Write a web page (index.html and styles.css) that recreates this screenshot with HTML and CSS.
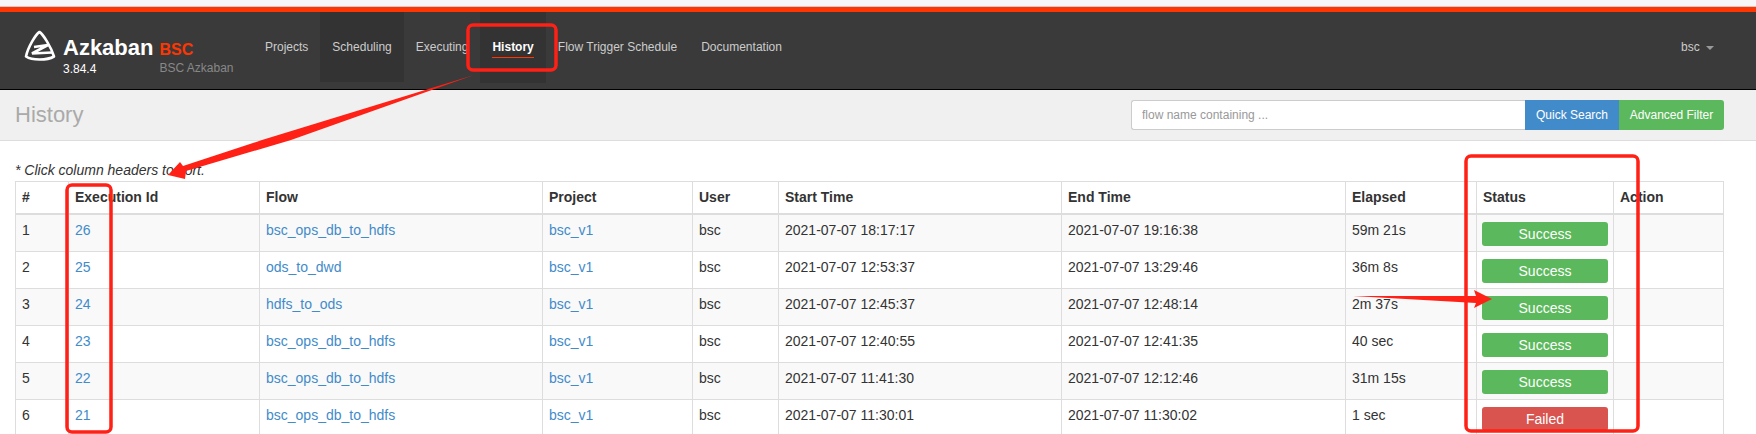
FILE: index.html
```html
<!DOCTYPE html>
<html lang="en">
<head>
  <meta charset="UTF-8">
  <title>Azkaban - History</title>
  <link rel="stylesheet" href="styles.css">
</head>
<body>
  <div class="topstrip"></div>
  <nav class="navbar">
    <div class="brand">
      <svg class="logo" viewBox="0 0 32 32" width="32" height="32">
        <path d="M15.5 2 C19 4 27 17 30 26.5 C23 30.5 8 30.5 2 26.5 C4 17 12 4 15.5 2 Z" fill="none" stroke="#fff" stroke-width="2.6" stroke-linejoin="round"/>
        <path d="M10 17 L24 15 L8 23.5 L28 22.5" fill="none" stroke="#fff" stroke-width="2.6"/>
      </svg>
      <div class="brand-name">
        <span class="brand-title">Azkaban</span>
        <span class="brand-version">3.84.4</span>
      </div>
      <div class="brand-env">
        <span class="env-name">BSC</span>
        <span class="env-desc">BSC Azkaban</span>
      </div>
    </div>
    <ul class="nav-links">
      <li><a href="#">Projects</a></li>
      <li class="dim"><a href="#">Scheduling</a></li>
      <li><a href="#">Executing</a></li>
      <li class="active"><a href="#">History</a></li>
      <li><a href="#">Flow Trigger Schedule</a></li>
      <li><a href="#">Documentation</a></li>
    </ul>
    <div class="user">bsc <span class="caret"></span></div>
  </nav>

  <div class="page-header">
    <h1>History</h1>
    <form class="search">
      <input type="text" placeholder="flow name containing ...">
      <button type="button" class="btn-blue">Quick Search</button>
      <button type="button" class="btn-green">Advanced Filter</button>
    </form>
  </div>

  <div class="content">
    <p class="note">* Click column headers to sort.</p>
    <table>
      <colgroup>
        <col class="c-num"><col class="c-id"><col class="c-flow"><col class="c-project"><col class="c-user">
        <col class="c-start"><col class="c-end"><col class="c-elapsed"><col class="c-status"><col>
      </colgroup>
      <thead>
        <tr>
          <th>#</th><th>Execution Id</th><th>Flow</th><th>Project</th><th>User</th>
          <th>Start Time</th><th>End Time</th><th>Elapsed</th><th>Status</th><th>Action</th>
        </tr>
      </thead>
      <tbody>
        <tr>
          <td>1</td><td><a href="#">26</a></td><td><a href="#">bsc_ops_db_to_hdfs</a></td><td><a href="#">bsc_v1</a></td><td>bsc</td>
          <td>2021-07-07 18:17:17</td><td>2021-07-07 19:16:38</td><td>59m 21s</td><td><div class="status ok">Success</div></td><td></td>
        </tr>
        <tr>
          <td>2</td><td><a href="#">25</a></td><td><a href="#">ods_to_dwd</a></td><td><a href="#">bsc_v1</a></td><td>bsc</td>
          <td>2021-07-07 12:53:37</td><td>2021-07-07 13:29:46</td><td>36m 8s</td><td><div class="status ok">Success</div></td><td></td>
        </tr>
        <tr>
          <td>3</td><td><a href="#">24</a></td><td><a href="#">hdfs_to_ods</a></td><td><a href="#">bsc_v1</a></td><td>bsc</td>
          <td>2021-07-07 12:45:37</td><td>2021-07-07 12:48:14</td><td>2m 37s</td><td><div class="status ok">Success</div></td><td></td>
        </tr>
        <tr>
          <td>4</td><td><a href="#">23</a></td><td><a href="#">bsc_ops_db_to_hdfs</a></td><td><a href="#">bsc_v1</a></td><td>bsc</td>
          <td>2021-07-07 12:40:55</td><td>2021-07-07 12:41:35</td><td>40 sec</td><td><div class="status ok">Success</div></td><td></td>
        </tr>
        <tr>
          <td>5</td><td><a href="#">22</a></td><td><a href="#">bsc_ops_db_to_hdfs</a></td><td><a href="#">bsc_v1</a></td><td>bsc</td>
          <td>2021-07-07 11:41:30</td><td>2021-07-07 12:12:46</td><td>31m 15s</td><td><div class="status ok">Success</div></td><td></td>
        </tr>
        <tr>
          <td>6</td><td><a href="#">21</a></td><td><a href="#">bsc_ops_db_to_hdfs</a></td><td><a href="#">bsc_v1</a></td><td>bsc</td>
          <td>2021-07-07 11:30:01</td><td>2021-07-07 11:30:02</td><td>1 sec</td><td><div class="status bad">Failed</div></td><td></td>
        </tr>
      </tbody>
    </table>
  </div>

  <!-- red markup drawn on top of the screenshot -->
  <svg class="markup" width="1756" height="434" viewBox="0 0 1756 434">
    <g fill="none" stroke="#ff2016" stroke-width="3.5">
      <rect x="468" y="25" width="88" height="45" rx="5"/>
      <rect x="67" y="185" width="44" height="247" rx="5"/>
      <rect x="1466" y="156" width="172" height="275" rx="5"/>
    </g>
    <g fill="#ff2016">
      <path d="M474 75 L291 140 L186 171 L185 179 L168 175 L180 162 L183 166 L262 140 Z"/>
      <path d="M1353 296 L1476 296 L1474 290 L1492 299 L1474 308 L1476 303 Z"/>
    </g>
  </svg>
</body>
</html>
```
FILE: styles.css
```css
html, body {
  margin: 0;
  height: 434px;
  overflow: hidden;
}
body {
  position: relative;
  font-family: "Liberation Sans", Arial, sans-serif;
  font-size: 14px;
  color: #333;
  background: #fff;
}
a {
  color: #428bca;
  text-decoration: none;
}

.topstrip {
  height: 6px;
  background: #f7f7f7;
  border-bottom: 1px solid #ccc;
}

.navbar {
  display: flex;
  height: 77px;
  background: #3a3a3a;
  border-top: 5px solid #ff3601;
  border-bottom: 1px solid #000;
}
.brand {
  display: flex;
  width: 253px;
  flex-shrink: 0;
  box-sizing: border-box;
  padding: 18px 0 0 24px;
}
.logo {
  margin-right: 7px;
}
.brand-name, .brand-env {
  display: flex;
  flex-direction: column;
}
.brand-title {
  font-size: 22px;
  font-weight: bold;
  line-height: 26px;
  margin-top: 5px;
  color: #fff;
}
.brand-version {
  font-size: 12px;
  line-height: 16px;
  color: #fff;
}
.brand-env {
  margin-left: 6px;
}
.env-name {
  font-size: 16px;
  font-weight: bold;
  line-height: 20px;
  margin-top: 10px;
  color: #ff3601;
}
.env-desc {
  font-size: 12px;
  line-height: 16px;
  color: #888;
}

.nav-links {
  display: flex;
  flex: 1;
  list-style: none;
  margin: 0;
  padding: 0;
}
.nav-links li {
  height: 70px;
  padding: 0 12px;
  font-size: 12px;
  line-height: 70px;
}
.nav-links a {
  display: block;
  height: 30px;
  line-height: 30px;
  margin-top: 20px;
  color: #ccc;
}
.nav-links .dim {
  background: #333;
}
.nav-links .active {
  background: #333;
  height: 71px;
}
.nav-links .active a {
  color: #fff;
  font-weight: bold;
  height: 25px;
  border-bottom: 1px solid #ff3601;
}
.user {
  padding: 20px 42px 0 0;
  font-size: 12px;
  line-height: 30px;
  color: #ccc;
}
.caret {
  display: inline-block;
  margin-left: 3px;
  vertical-align: middle;
  border-top: 4px solid #999;
  border-left: 4px solid transparent;
  border-right: 4px solid transparent;
}

.page-header {
  display: flex;
  justify-content: space-between;
  align-items: center;
  height: 51px;
  box-sizing: border-box;
  padding: 0 32px 0 15px;
  background: #f0f0f0;
  border-bottom: 1px solid #ddd;
}
.page-header h1 {
  margin: 0;
  font-size: 22px;
  font-weight: normal;
  color: #aaa;
}
.search {
  display: flex;
  height: 30px;
}
.search input {
  width: 394px;
  box-sizing: border-box;
  padding: 0 10px;
  font-family: inherit;
  font-size: 12px;
  border: 1px solid #ccc;
  border-right: none;
  border-radius: 3px 0 0 3px;
  background: #fff;
}
.search input::placeholder {
  color: #999;
}
.search button {
  border: 1px solid transparent;
  color: #fff;
  font-family: inherit;
  font-size: 12px;
  padding: 0;
}
.btn-blue {
  width: 94px;
  background: #428bca;
  border-color: #357ebd;
}
.btn-green {
  width: 105px;
  background: #5cb85c;
  border-color: #4cae4c;
  border-radius: 0 3px 3px 0;
}

.content {
  padding: 0 31px 0 15px;
}
.note {
  height: 40px;
  margin: 0;
  padding: 21px 0 0 0;
  box-sizing: border-box;
  font-size: 14px;
  line-height: 16px;
  font-style: italic;
}
table {
  width: 1709px;
  table-layout: fixed;
  border-collapse: collapse;
}
.c-num { width: 53px; }
.c-id { width: 191px; }
.c-flow { width: 283px; }
.c-project { width: 150px; }
.c-user { width: 86px; }
.c-start { width: 283px; }
.c-end { width: 284px; }
.c-elapsed { width: 131px; }
.c-status { width: 137px; }
th, td {
  border: 1px solid #ddd;
  padding: 5px 6px 6px;
  text-align: left;
  vertical-align: top;
  line-height: 20px;
}
th {
  height: 19px;
  border-bottom: 2px solid #ddd;
}
td {
  height: 25px;
}
tbody tr:nth-child(odd) {
  background: #f9f9f9;
}
.status {
  height: 24px;
  margin: 2px -1px -1px;
  border-radius: 3px;
  color: #fff;
  line-height: 24px;
  text-align: center;
}
.ok {
  background: #5cb85c;
}
.bad {
  background: #d9534f;
}

.markup {
  position: absolute;
  top: 0;
  left: 0;
  pointer-events: none;
}
```
